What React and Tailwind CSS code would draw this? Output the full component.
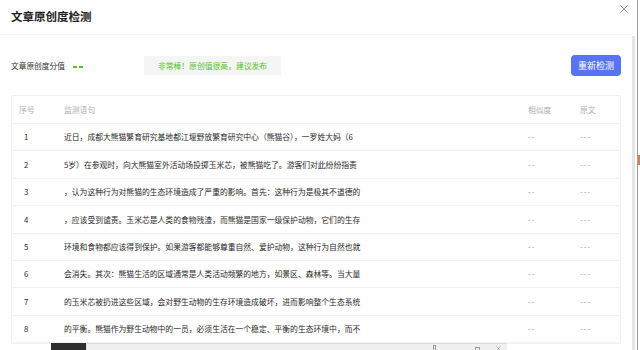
import React from 'react'

const rows = [
  '近日，成都大熊猫繁育研究基地都江堰野放繁育研究中心（熊猫谷），一罗姓大妈（6',
  '5岁）在参观时，向大熊猫室外活动场投掷玉米芯，被熊猫吃了。游客们对此纷纷指责',
  '，认为这种行为对熊猫的生态环境造成了严重的影响。首先：这种行为是极其不道德的',
  '，应该受到谴责。玉米芯是人类的食物残渣，而熊猫是国家一级保护动物，它们的生存',
  '环境和食物都应该得到保护。如果游客都能够尊重自然、爱护动物，这种行为自然也就',
  '会消失。其次：熊猫生活的区域通常是人类活动频繁的地方，如景区、森林等。当大量',
  '的玉米芯被扔进这些区域，会对野生动物的生存环境造成破坏，进而影响整个生态系统',
  '的平衡。熊猫作为野生动物中的一员，必须生活在一个稳定、平衡的生态环境中，而不',
]

const font = { fontFamily: '"Noto Sans CJK SC", "Noto Sans", sans-serif' }

export default function App() {
  return (
    <div className="relative flex w-[640px] h-[350px] overflow-hidden bg-white" style={font}>
      <div className="flex flex-col w-[632px]">
        {/* Header */}
        <div className="flex items-center justify-between h-[35px] border-b border-[#f2f2f2] pl-[11px] pr-[4px]">
          <h1 className="text-[11.5px] font-bold text-[#222] leading-none">文章原创度检测</h1>
          <svg width="8" height="8" viewBox="0 0 8 8" className="self-start mt-[5px]">
            <path d="M0.5 0.5L7.5 7.5M7.5 0.5L0.5 7.5" stroke="#888" strokeWidth="0.9" />
          </svg>
        </div>

        <div className="px-[11px] pt-[20px]">
          {/* Score row */}
          <div className="flex items-center h-[21px]">
            <span className="text-[7.7px] text-[#333] w-[62px]">文章原创度分值</span>
            <span className="flex gap-[2px] mt-[2px]">
              <span className="w-[4px] h-[2px] bg-[#52c41a]" />
              <span className="w-[4px] h-[2px] bg-[#52c41a]" />
            </span>
            <div className="ml-[61px] flex items-center justify-center w-[137px] h-[19px] bg-[#f5f5f5] text-[7.8px] text-[#52c41a]">
              非常棒！原创值很高，建议发布
            </div>
            <button className="ml-auto w-[50px] h-[21px] rounded-[4px] bg-[#5874f2] text-white text-[9px]">
              重新检测
            </button>
          </div>

          {/* Table */}
          <div className="mt-[19px] border border-[#f2f2f2]">
            <div className="flex items-center h-[28px] border-b border-[#f2f2f2] text-[7.8px] text-[#b0b0b0]">
              <div className="w-[52px] pl-[7px]">序号</div>
              <div className="w-[464px]">监测语句</div>
              <div className="w-[52px]">相似度</div>
              <div>原文</div>
            </div>
            {rows.map((text, i) => (
              <div key={i} className="flex items-center h-[27.4px] border-b border-[#f2f2f2] text-[7.8px] text-[#2a2a2a]">
                <div className="w-[52px] pl-[12px]">{i + 1}</div>
                <div className="w-[464px] whitespace-nowrap overflow-hidden">{text}</div>
                <div className="w-[52px] text-[#999] tracking-[1px]">--</div>
                <div className="text-[#999] tracking-[1px]">---</div>
              </div>
            ))}
          </div>
        </div>
      </div>

      {/* Scrollbar strip */}
      <div className="flex w-[8px] h-full">
        <div className="w-[3px] mt-[36px] bg-[#e6e6e6]" />
        <div className="w-[2px]" />
        <div className="w-[1px] bg-[#a0a0a0]" />
        <div className="w-[2px] flex flex-col">
          <div className="h-[155px]" />
          <div className="h-[10px] bg-[#d9824f]" />
        </div>
      </div>

      {/* Bottom window peek */}
      <div className="absolute left-[51px] bottom-0 flex h-[7px]">
        <div className="w-[35px] bg-[#2e2e2e]" />
        <div className="relative w-[421px] bg-[#f0f0f0] border-t border-l border-[#dcdcdc]">
          <div className="absolute left-[346px] top-[1px] w-[3px] h-[6px] border border-[#999]" />
          <div className="absolute left-[388px] top-[3px] w-[5px] h-[4px] border-t border-l border-r border-[#999]" />
          <svg width="5" height="5" viewBox="0 0 5 5" className="absolute left-[409px] top-[2px]">
            <path d="M0.5 0.5L4.5 4.5M4.5 0.5L0.5 4.5" stroke="#999" strokeWidth="0.8" />
          </svg>
        </div>
      </div>
    </div>
  )
}
